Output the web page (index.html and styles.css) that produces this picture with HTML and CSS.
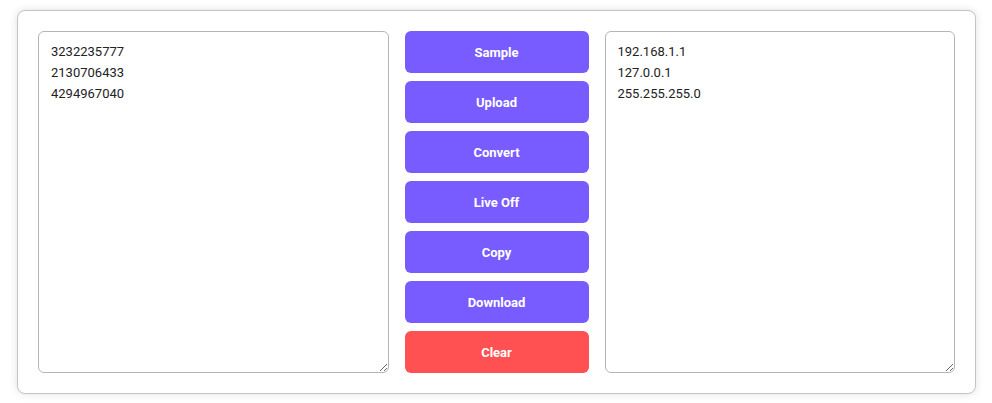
FILE: index.html
```html
<!DOCTYPE html>
<html lang="en">
<head>
<meta charset="utf-8">
<title>Decimal to IP</title>
<link rel="stylesheet" href="styles.css">
</head>
<body>
<div class="card">
  <textarea class="box" spellcheck="false">3232235777
2130706433
4294967040</textarea>
  <div class="actions">
    <button class="btn">Sample</button>
    <button class="btn">Upload</button>
    <button class="btn">Convert</button>
    <button class="btn">Live Off</button>
    <button class="btn">Copy</button>
    <button class="btn">Download</button>
    <button class="btn btn-danger">Clear</button>
  </div>
  <textarea class="box" spellcheck="false">192.168.1.1
127.0.0.1
255.255.255.0</textarea>
</div>
</body>
</html>
```
FILE: styles.css
```css
html, body {
  margin: 0;
  background: #ffffff;
}
body {
  padding: 10px 16px 10px 17px;
  font-family: Roboto, "Liberation Sans", sans-serif;
}
.card {
  display: flex;
  gap: 16px;
  padding: 20px;
  border: 1px solid #c4c4c4;
  border-radius: 8px;
  box-shadow: 0 0 8px rgba(0, 0, 0, 0.12);
  background: #fff;
}
.box {
  flex: 1 1 0;
  min-width: 0;
  height: 342px;
  box-sizing: border-box;
  margin: 0;
  padding: 9px 12px;
  border: 1px solid #b5b5b5;
  border-radius: 6px;
  font-family: Roboto, "Liberation Sans", sans-serif;
  font-size: 13px;
  line-height: 21px;
  color: #222;
  resize: vertical;
  outline: none;
}
.actions {
  width: 184px;
  flex: none;
  display: flex;
  flex-direction: column;
  gap: 8px;
}
.btn {
  height: 42px;
  border: none;
  border-radius: 6px;
  background: #785cff;
  color: #fff;
  font-family: Roboto, "Liberation Sans", sans-serif;
  font-weight: 700;
  font-size: 13px;
  cursor: pointer;
}
.btn-danger {
  background: #ff5052;
}
```
